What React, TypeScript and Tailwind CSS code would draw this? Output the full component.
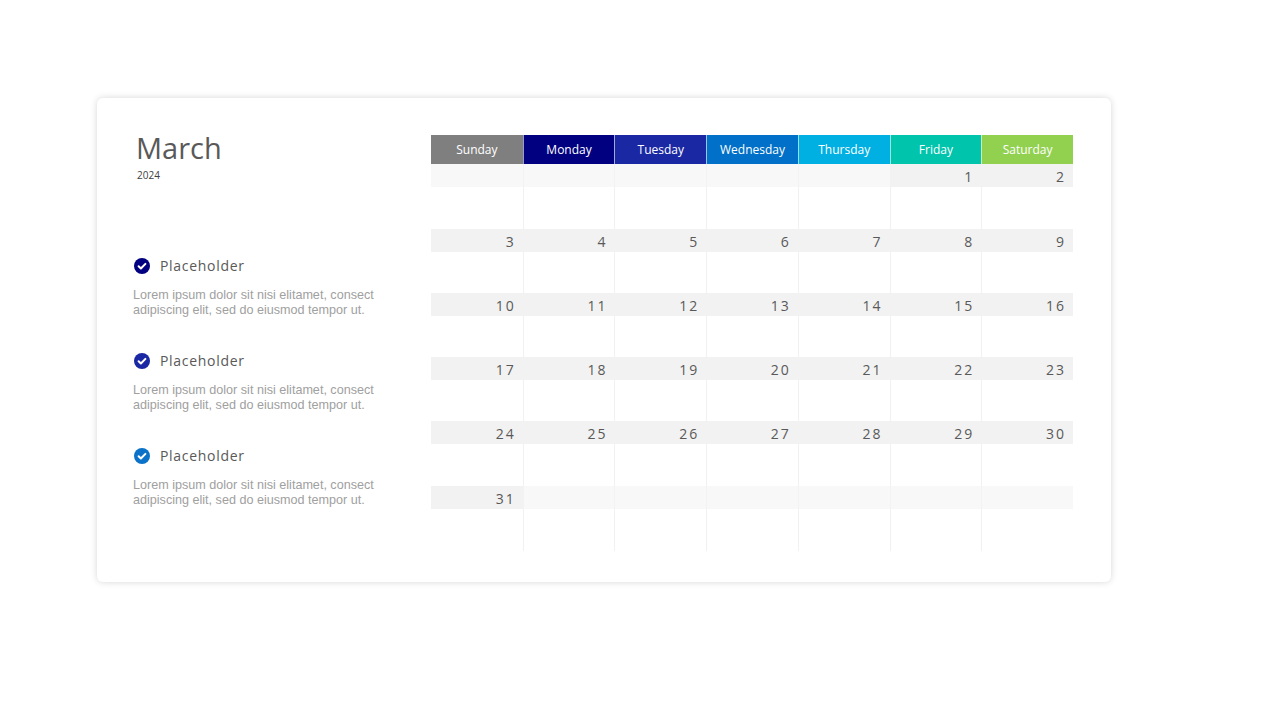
import React from 'react';

const days = [
  { name: 'Sunday', color: 'bg-[#7f7f7f]' },
  { name: 'Monday', color: 'bg-[#000080]' },
  { name: 'Tuesday', color: 'bg-[#1a28a4]' },
  { name: 'Wednesday', color: 'bg-[#0070c8]' },
  { name: 'Thursday', color: 'bg-[#00b0e2]' },
  { name: 'Friday', color: 'bg-[#00c4ac]' },
  { name: 'Saturday', color: 'bg-[#92d050]' },
];

// March 2024 starts on a Friday
const weeks: (number | null)[][] = [];
{
  const cells: (number | null)[] = [null, null, null, null, null];
  for (let d = 1; d <= 31; d++) cells.push(d);
  while (cells.length % 7 !== 0) cells.push(null);
  for (let i = 0; i < cells.length; i += 7) weeks.push(cells.slice(i, i + 7));
}

const items = [
  { color: 'text-[#000080]' },
  { color: 'text-[#1a28a4]' },
  { color: 'text-[#0a72c8]' },
];

function CheckIcon({ className }: { className: string }) {
  return (
    <svg viewBox="0 0 16 16" className={`w-4 h-4 ${className}`}>
      <circle cx="8" cy="8" r="8" fill="currentColor" />
      <path d="M4.6 8.2l2.3 2.3 4.5-4.6" fill="none" stroke="#fff" strokeWidth="2" strokeLinecap="round" strokeLinejoin="round" />
    </svg>
  );
}

function Week({ week, tall }: { week: (number | null)[]; tall: boolean }) {
  return (
    <div>
      <div className="grid grid-cols-7 h-[23px]">
        {week.map((d, i) => (
          <div
            key={i}
            className={`flex items-center justify-end pr-[7px] pt-[1px] text-[14px] tracking-[2px] text-[#595959] ${
              d ? 'bg-[#f2f2f2]' : 'bg-[#f8f8f8]'
            } ${i > 0 && !d ? 'border-l border-[#f3f3f3]' : ''}`}
          >
            {d}
          </div>
        ))}
      </div>
      <div className={`grid grid-cols-7 ${tall ? 'h-[42px]' : 'h-[41px]'}`}>
        {week.map((_, i) => (
          <div key={i} className={i > 0 ? 'border-l border-[#f1f1f1]' : ''} />
        ))}
      </div>
    </div>
  );
}

export default function App() {
  return (
    <div className="w-[1280px] h-[720px] bg-white relative font-['Open_Sans',sans-serif]">
      <div className="h-[98px]" />
      <div className="ml-[97px] w-[1014px] h-[484px] bg-white rounded-[6px] shadow-[0_0_7px_rgba(0,0,0,0.16)] flex pl-[36px] pt-[37px]">
        {/* Left column */}
        <div className="w-[298px] flex flex-col">
          <div className="pl-[3px] -mt-[6px] text-[29px] leading-[38px] text-[#595959]">March</div>
          <div className="pl-[4px] mt-[1px] text-[10px] leading-[14px] text-[#404040]">2024</div>
          <div className="mt-[76px] flex flex-col gap-[35px]">
            {items.map((it, i) => (
              <div key={i}>
                <div className="flex items-center h-[16px] gap-[10px] pl-[1px]">
                  <CheckIcon className={it.color} />
                  <span className="text-[14px] tracking-[0.7px] text-[#595959] leading-[16px]">Placeholder</span>
                </div>
                <div className="mt-[14px] text-[12.6px] leading-[15px] text-[#a0a0a0] font-['Liberation_Sans',sans-serif]">
                  Lorem ipsum dolor sit nisi elitamet, consect
                  <br />
                  adipiscing elit, sed do eiusmod tempor ut.
                </div>
              </div>
            ))}
          </div>
        </div>

        {/* Calendar */}
        <div className="w-[642px]">
          <div className="grid grid-cols-7 h-[29px]">
            {days.map((d, i) => (
              <div
                key={d.name}
                className={`${d.color} flex items-center justify-center text-[12px] text-white ${
                  i > 0 ? 'border-l border-white/60' : ''
                }`}
              >
                {d.name}
              </div>
            ))}
          </div>
          {weeks.map((w, i) => (
            <Week key={i} week={w} tall={i === 0 || i === 4 || i === weeks.length - 1} />
          ))}
        </div>
      </div>
    </div>
  );
}
